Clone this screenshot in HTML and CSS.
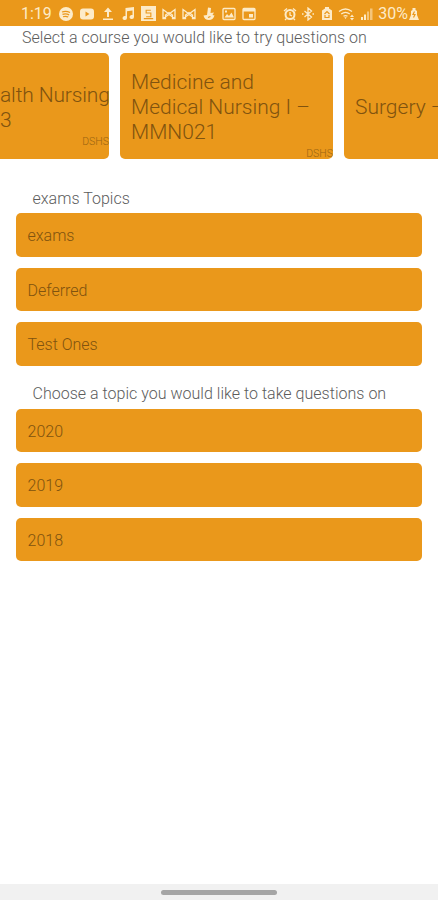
FILE: index.html
```
<!DOCTYPE html>
<html lang="en">
<head>
  <meta charset="utf-8">
  <title>Courses</title>
  <meta name="viewport" content="width=device-width, initial-scale=1">
  <link rel="stylesheet" href="styles.css">
</head>
<body>

  <header class="status-bar">
    <span class="clock">1:19</span>
    <div class="notifications">
      <!-- music stream -->
      <svg viewBox="0 0 14 14"><circle class="fill" cx="7" cy="7" r="7"/><path class="cut" d="M3 5q4-1.500 8 .5M3.500 7.400q3.500-1.200 6.600.5M4 9.700q3-1 5.200.4"/></svg>
      <!-- video -->
      <svg class="wide" viewBox="0 0 16 14"><rect class="fill" x="1" y="1.500" width="14" height="11" rx="3"/><path class="hole" d="M6.500 4.500v5l4-2.500z"/></svg>
      <!-- upload -->
      <svg viewBox="0 0 14 14"><path class="fill" d="M7 .5L3 5h3v5h2V5h3zM2 11.500h10V13H2z"/></svg>
      <!-- note -->
      <svg viewBox="0 0 14 14"><path class="fill" d="M4.500 1L13 0v10a2.200 2 0 1 1-1.500-1.900V3.500L6 4.200V11a2.200 2 0 1 1-1.500-1.900z"/></svg>
      <!-- badge -->
      <svg class="badge" viewBox="0 0 16 16"><path class="fill" d="M0 0h16v16H0z"/><path class="cut" d="M10.500 4.500h-5v3h5v4h-5M3 13.500h10"/></svg>
      <!-- mail -->
      <svg viewBox="0 0 14 14"><path class="line" d="M1 11.500V2.500l6 4.500 6-4.500v9h-2.500V8L7 5.500 3.500 8v3.500zM1 11.500l6-4 6 4"/></svg>
      <svg viewBox="0 0 14 14"><path class="line" d="M1 11.500V2.500l6 4.500 6-4.500v9h-2.500V8L7 5.500 3.500 8v3.500zM1 11.500l6-4 6 4"/></svg>
      <!-- flame -->
      <svg viewBox="0 0 14 14"><path class="fill" d="M6 .5l3 .5-.5 5L12 5.500 10.500 8l2 .5Q11 13 7 13q-4.500 0-5.500-4.500L5 8z"/><path class="cut" d="M6 10.500l2.500-1"/></svg>
      <!-- picture -->
      <svg viewBox="0 0 14 14"><rect class="line" x="1" y="1.500" width="12" height="11" rx="1"/><path class="fill" d="M2.500 10.500L5 7l2 2 2.500-3.500 2.500 5zM3 3.500h2v2H3z"/></svg>
      <!-- calendar -->
      <svg viewBox="0 0 14 14"><rect class="line" x="1" y="1.500" width="12" height="11" rx="1"/><path class="fill" d="M1 1.500h12v3H1zM7 7h4v3.500H7z"/></svg>
    </div>
    <div class="system">
      <!-- alarm -->
      <svg viewBox="0 0 14 14"><circle class="line heavy" cx="7" cy="7.500" r="4.500"/><path class="line" d="M1 4l3-2.500M13 4l-3-2.500M7 5v3l2 1M3.500 11.500L2 13M10.500 11.500L12 13"/></svg>
      <!-- bluetooth -->
      <svg viewBox="0 0 14 14"><path class="line" d="M3.500 4l7 6L7 13V1l3.500 3-7 6M1 7h1.500M11.500 7H13"/></svg>
      <!-- battery saver -->
      <svg viewBox="0 0 14 14"><path class="fill" d="M5 0h4v1.500l3 2V13H2V3.500l3-2z"/><path class="cut" d="M4.500 7L7 4.500 9.500 7M5 8v2.500h4V8"/></svg>
      <!-- wifi -->
      <svg class="wifi" viewBox="0 0 17 14"><path class="line" d="M1 4.500q6.500-5 13 0M3.200 7q4.300-3.300 8.600 0M5.500 9.300q2-1.500 4 0"/><path class="fill" d="M6.300 10.200h2.400L7.500 12zM12 10l2-2.500 2 2.500zM12 11l2 2.500 2-2.500z"/></svg>
      <!-- signal -->
      <svg viewBox="0 0 14 14"><path class="fill" d="M1 10h2v3H1zM4 7.500h2V13H4z"/><path class="fill faint" d="M7 4.500h2V13H7zM10 1.500h2.500V13H10z"/></svg>
      <span class="percent">30%</span>
      <!-- charging -->
      <svg class="charge" viewBox="0 0 10 14"><path class="fill" d="M3.500 1h3v2l1.500 1v4l2 5H0l2-5V4l1.500-1z"/><path class="cut" d="M5.500 4.500L4 7.500h2L4.500 10.500"/></svg>
    </div>
  </header>

  <main>
    <p class="prompt">Select a course you would like to try questions on</p>

    <div class="courses">
      <div class="course course-prev">
        <div class="course-body">
          <h2>alth Nursing<br>3</h2>
          <span class="school">DSHS</span>
        </div>
      </div>
      <div class="course">
        <div class="course-body">
          <h2>Medicine and<br>Medical Nursing I –<br>MMN021</h2>
          <span class="school">DSHS</span>
        </div>
      </div>
      <div class="course">
        <div class="course-body">
          <h2>Surgery –</h2>
        </div>
      </div>
    </div>

    <section class="topics">
      <h3>exams Topics</h3>
      <div class="topic">exams</div>
      <div class="topic">Deferred</div>
      <div class="topic">Test Ones</div>
    </section>

    <section class="topics">
      <h3 class="choose">Choose a topic you would like to take questions on</h3>
      <div class="topic">2020</div>
      <div class="topic">2019</div>
      <div class="topic">2018</div>
    </section>
  </main>

  <footer class="nav-bar"><div class="handle"></div></footer>

</body>
</html>
```
FILE: styles.css
```
html, body {
  margin: 0;
  padding: 0;
  height: 100%;
  overflow: hidden;
}

body {
  display: flex;
  flex-direction: column;
  background: #fff;
  color: #5c5c5c;
  font-family: Roboto, sans-serif;
  font-weight: 300;
}

.status-bar {
  display: flex;
  align-items: center;
  box-sizing: border-box;
  height: 25.5px;
  flex: none;
  padding: 2px 19.5px 0 21px;
  background: #ea981b;
  color: #fdebc8;
  font-size: 16px;
  font-weight: 400;
}

.clock {
  width: 37.5px;
}

.notifications {
  display: flex;
  align-items: center;
  gap: 6px;
}

.system {
  display: flex;
  align-items: center;
  gap: 4.5px;
  margin-left: auto;
}

svg {
  display: block;
  width: 14px;
  height: 14px;
}
svg.wide {
  width: 16px;
}
svg.badge {
  width: 15px;
  height: 15px;
}
svg.wifi {
  width: 17px;
}
svg.charge {
  width: 10px;
  margin-left: -4px;
}

.fill {
  fill: #fdebc8;
}
.faint {
  opacity: 0.55;
}
.hole {
  fill: #ea981b;
}
.line {
  fill: none;
  stroke: #fdebc8;
  stroke-width: 1.3;
}
.heavy {
  stroke-width: 2;
}
.cut {
  fill: none;
  stroke: #ea981b;
  stroke-width: 1.2;
}

main {
  flex: 1;
  min-height: 0;
}

.prompt {
  margin: 0;
  padding: 1.5px 0 0 22px;
  height: 25.5px;
  box-sizing: border-box;
  font-size: 16px;
  letter-spacing: 0.02px;
  line-height: 21px;
  white-space: nowrap;
}

.courses {
  display: flex;
  gap: 11px;
  margin-top: 2px;
  overflow: hidden;
}

.course {
  display: flex;
  align-items: center;
  flex: none;
  box-sizing: border-box;
  width: 213px;
  height: 106px;
  padding: 3px 0 0 11px;
  border-radius: 5px;
  background: #ea981b;
  color: #80530f;
}
/* scrolled mostly out of view */
.course-prev {
  width: 109px;
  padding-left: 0;
  border-radius: 0 5px 5px 0;
}
.course-prev h2 {
  letter-spacing: -0.15px;
}

.course-body {
  flex: 1;
  min-width: 0;
}

.course h2 {
  margin: 0;
  font-size: 21px;
  font-weight: 300;
  line-height: 25px;
  white-space: nowrap;
}

/* takes no height, so the title alone is centred */
.school {
  display: block;
  height: 14px;
  margin-bottom: -14px;
  font-size: 10.5px;
  line-height: 17px;
  text-align: right;
  opacity: 0.75;
}

.topics {
  padding: 0 16px;
}

.topics h3 {
  margin: 0;
  padding: 30px 0 4px 16.5px;
  font-size: 16px;
  font-weight: 300;
  letter-spacing: 0.02px;
  line-height: 20px;
  white-space: nowrap;
}
.topics h3.choose {
  padding-top: 7px;
  padding-bottom: 5px;
}

.topic {
  height: 43.5px;
  margin-bottom: 11px;
  padding-left: 11.5px;
  border-radius: 5px;
  background: #ea981b;
  color: #80530f;
  font-size: 16px;
  line-height: 45px;
}

.nav-bar {
  display: flex;
  justify-content: center;
  align-items: center;
  flex: none;
  height: 16px;
  background: #f1f1f1;
}

.handle {
  width: 116px;
  height: 5px;
  border-radius: 3px;
  background: #a5a5a5;
}
```
